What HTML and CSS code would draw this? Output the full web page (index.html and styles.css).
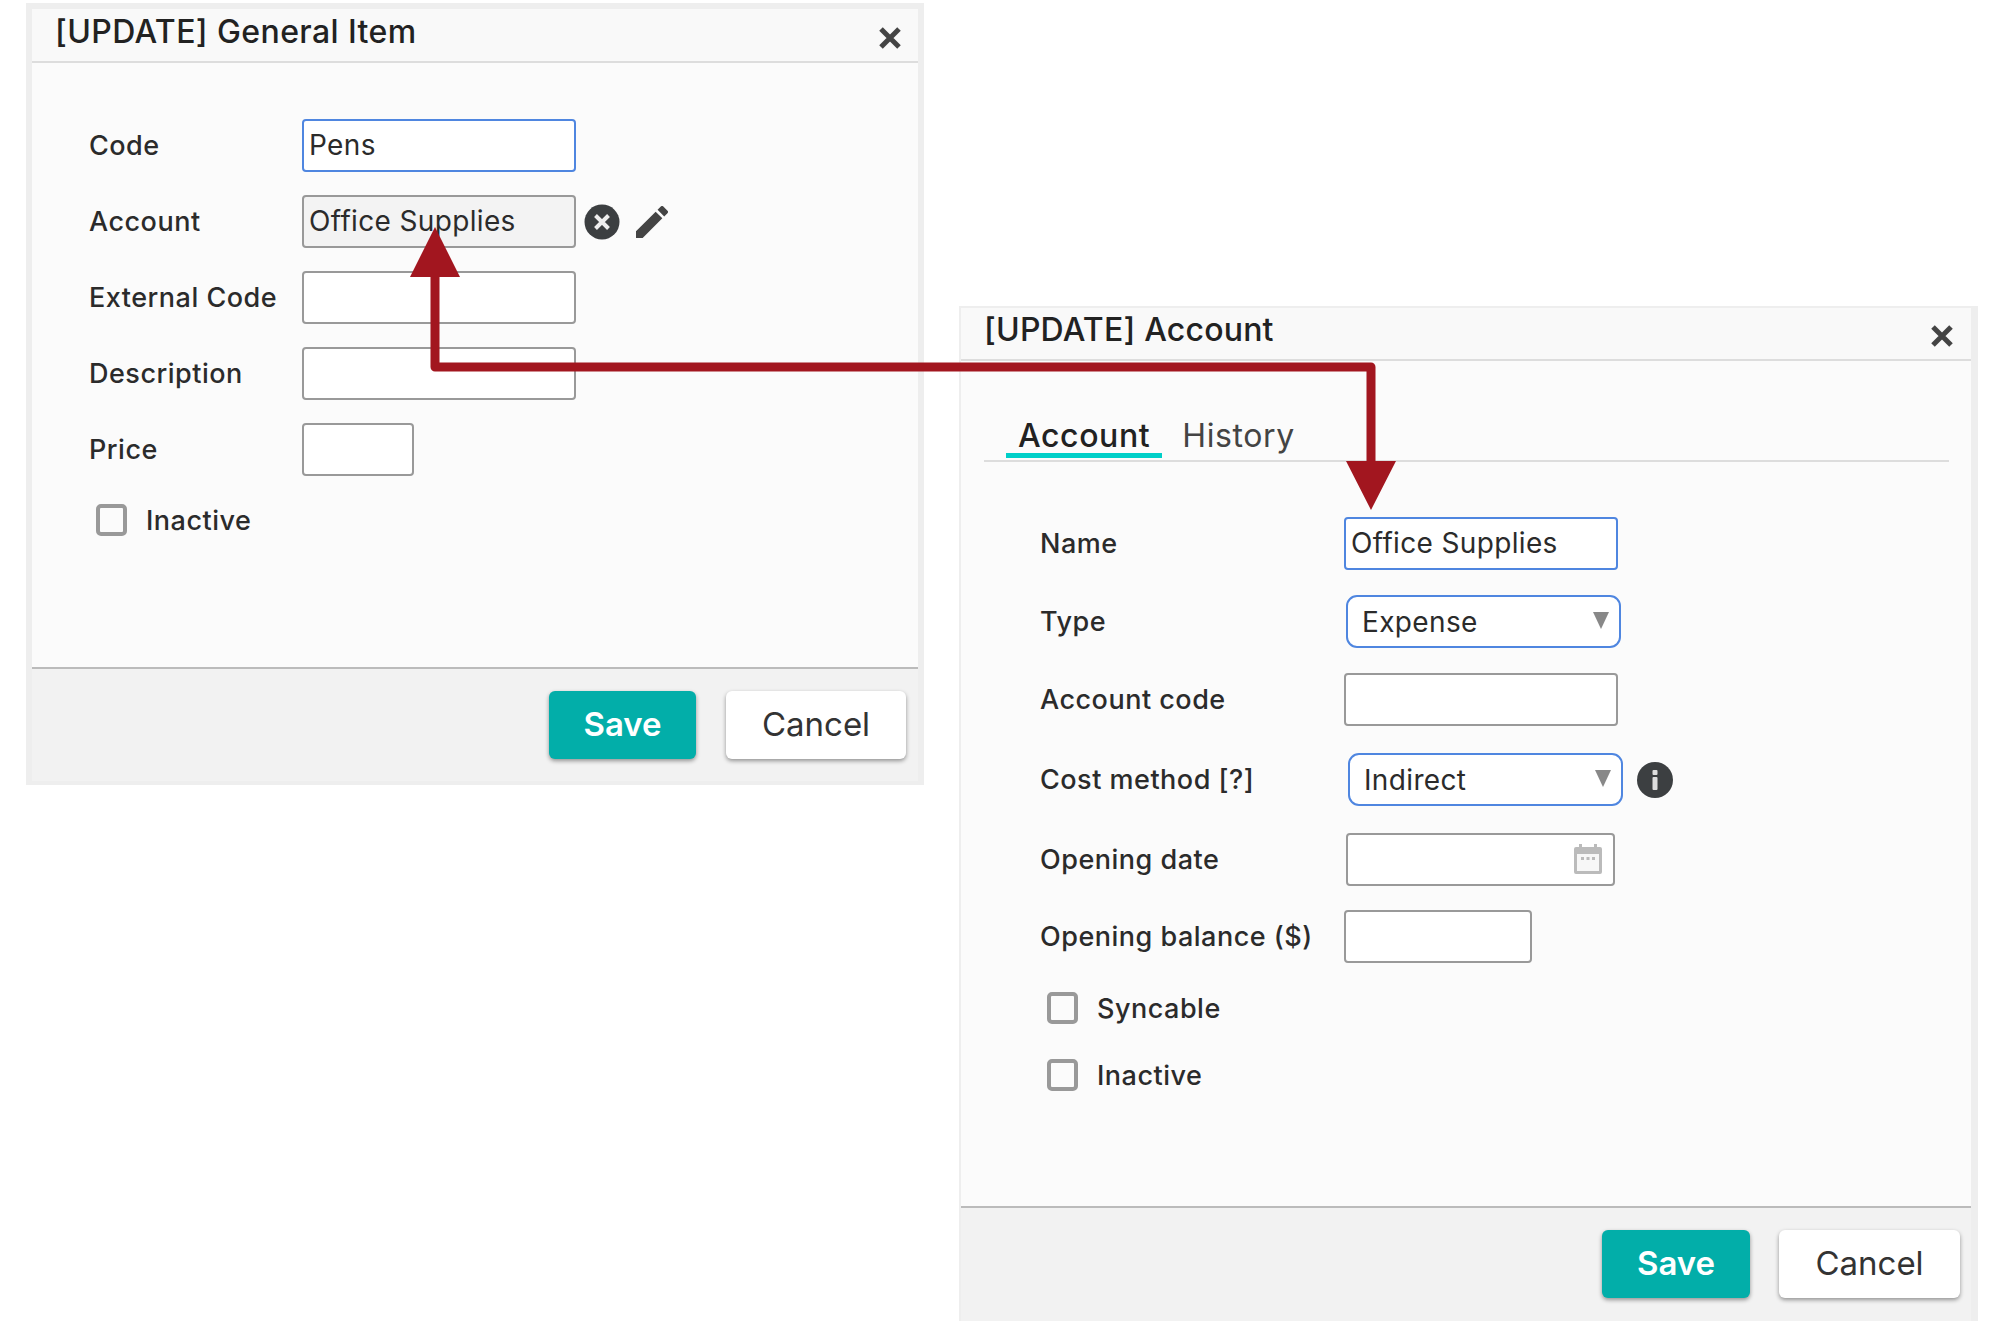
FILE: index.html
```html
<!DOCTYPE html>
<html lang="en">
<head>
<meta charset="utf-8">
<title>Update dialogs</title>
<link rel="stylesheet" href="styles.css">
</head>
<body>
<main class="canvas">
  <section class="dialog dialog-item">
    <header class="dialog-head">
      <h2 class="dialog-title">[UPDATE] General Item</h2>
      <svg class="close" viewBox="0 0 22 22"><path d="M2 2 20 20M20 2 2 20"/></svg>
    </header>
    <div class="dialog-body form-item">
      <div class="row"><span class="label">Code</span><div class="field field-wide focus">Pens</div></div>
      <div class="row"><span class="label">Account</span><div class="field field-wide readonly">Office Supplies</div>
        <svg class="icon-clear" viewBox="0 0 36 36"><circle cx="18" cy="18" r="17.5"/><path d="M11.500 11.500 24.500 24.500M24.500 11.500 11.500 24.500"/></svg>
        <svg class="icon-pencil" viewBox="3 3 18 18"><path d="M3 17.25V21h3.75L17.81 9.94l-3.75-3.75L3 17.25zM20.71 7.04a1 1 0 0 0 0-1.41l-2.34-2.34a1 1 0 0 0-1.41 0l-1.83 1.83 3.75 3.75 1.83-1.83z"/></svg>
      </div>
      <div class="row"><span class="label">External Code</span><div class="field field-wide"></div></div>
      <div class="row"><span class="label">Description</span><div class="field field-wide"></div></div>
      <div class="row"><span class="label">Price</span><div class="field field-price"></div></div>
      <div class="check check-first"><span class="box"></span><span class="label">Inactive</span></div>
    </div>
    <footer class="dialog-foot">
      <button class="btn btn-save">Save</button>
      <button class="btn btn-cancel">Cancel</button>
    </footer>
  </section>

  <section class="dialog dialog-account">
    <header class="dialog-head">
      <h2 class="dialog-title">[UPDATE] Account</h2>
      <svg class="close" viewBox="0 0 22 22"><path d="M2 2 20 20M20 2 2 20"/></svg>
    </header>
    <div class="dialog-body">
      <nav class="tabs">
        <span class="tab tab-active">Account</span>
        <span class="tab">History</span>
      </nav>
      <div class="form-account">
        <div class="row"><span class="label">Name</span><div class="field field-wide focus">Office Supplies</div></div>
        <div class="row"><span class="label">Type</span><div class="select select-type">Expense<span class="caret"></span></div></div>
        <div class="row"><span class="label">Account code</span><div class="field field-wide"></div></div>
        <div class="row row-cost"><span class="label">Cost method [?]</span><div class="select select-cost">Indirect<span class="caret"></span></div>
          <svg class="icon-info" viewBox="0 0 36 36"><circle cx="18" cy="18" r="18"/><rect x="15.5" y="8" width="5" height="5" rx="1"/><rect x="15.5" y="15" width="5" height="13" rx="1"/></svg>
        </div>
        <div class="row row-date"><span class="label">Opening date</span><div class="field field-date">
          <svg class="icon-cal" viewBox="0 0 28 30"><path d="M5 0h3v3h12V0h3v3h3a2 2 0 0 1 2 2v23a2 2 0 0 1-2 2H2a2 2 0 0 1-2-2V5a2 2 0 0 1 2-2h3z"/><rect class="cal-page" x="3" y="10" width="22" height="17"/><rect x="7" y="13" width="3" height="3"/><rect x="12.500" y="13" width="3" height="3"/><rect x="18" y="13" width="3" height="3"/></svg>
        </div></div>
        <div class="row row-balance"><span class="label">Opening balance ($)</span><div class="field field-balance"></div></div>
        <div class="check check-sync"><span class="box"></span><span class="label">Syncable</span></div>
        <div class="check check-next"><span class="box"></span><span class="label">Inactive</span></div>
      </div>
    </div>
    <footer class="dialog-foot">
      <button class="btn btn-save">Save</button>
      <button class="btn btn-cancel">Cancel</button>
    </footer>
  </section>

  <svg class="arrow" viewBox="0 0 2001 1338">
    <path class="arrow-line" d="M435 270V367H1371V470"/>
    <path class="arrow-head" d="M435 227 460 277H410ZM1346 461H1396L1371 510Z"/>
  </svg>
</main>
</body>
</html>
```
FILE: styles.css
```css
* { box-sizing: border-box; }
html, body { margin: 0; background: #fff; }
body { font-family: Inter, "Open Sans", "Liberation Sans", sans-serif; color: #2b2b2b; }
.canvas { position: relative; width: 2001px; height: 1338px; overflow: hidden; }

.dialog { position: absolute; display: flex; flex-direction: column; background: #fafafa; border-style: solid; border-color: #eee; }
.dialog-item { left: 26px; top: 3px; width: 898px; height: 782px; border-width: 6px 6px 4px 6px; }
.dialog-account { left: 959px; top: 306px; width: 1019px; height: 1015px; border-width: 2px 7px 0 2px; }

.dialog-head { display: flex; justify-content: space-between; flex: none; padding-left: 23px; border-bottom: 2px solid #ddd; background: #f9f9f9; }
.dialog-item .dialog-head { height: 54px; padding-right: 17px; }
.dialog-account .dialog-head { height: 53px; padding-right: 18px; }
.dialog-title { margin: 0; font-size: 32px; font-weight: 500; line-height: 46px; letter-spacing: 0.4px; color: #222; }
.dialog-account .dialog-title { line-height: 44px; letter-spacing: 0.2px; }
.close { width: 22px; height: 22px; margin-top: 18px; fill: none; stroke: #444; stroke-width: 5; }
.dialog-account .close { margin-top: 17px; }

.dialog-body { flex: 1; background: #fbfbfb; }
.form-item { display: flex; flex-direction: column; gap: 23px; padding: 56px 0 0 57px; }
.form-item .label { width: 213px; }
.form-account { display: flex; flex-direction: column; gap: 25px; padding: 55px 0 0 79px; }
.form-account .label { width: 304px; }

.row { display: flex; align-items: center; height: 53px; }
.label { flex: none; font-size: 27px; font-weight: 500; letter-spacing: 0.5px; color: #2b2b2b; }

.field { flex: none; height: 53px; padding-left: 5px; border: 2px solid #999; border-radius: 4px; background: #fff; font-size: 28px; line-height: 49px; letter-spacing: 0.35px; }
.field-wide { width: 274px; }
.field-price { width: 112px; }
.focus { border-color: #4f86e0; }
.readonly { background: #f3f3f3; }
.field-date { position: relative; width: 269px; margin-left: 2px; }
.field-balance { width: 188px; }

.select { display: flex; align-items: center; justify-content: space-between; flex: none; width: 275px; height: 53px; padding: 0 10px 0 14px; border: 2px solid #4f86e0; border-radius: 11px; background: #fff; font-size: 28px; letter-spacing: 0.35px; }
.select-type { margin-left: 2px; }
.select-cost { margin-left: 4px; }
.caret { width: 0; height: 0; margin-top: -3px; border-style: solid; border-width: 17px 8px 0 8px; border-color: #888 transparent transparent; }

.row-cost { margin-top: 2px; }
.row-date { margin-top: 2px; }
.row-balance { margin-top: -1px; }

.icon-clear { width: 36px; height: 36px; margin-left: 8px; fill: #3c3f41; stroke: none; }
.icon-clear path { fill: none; stroke: #eee; stroke-width: 4; }
.icon-pencil { width: 32px; height: 32px; margin-left: 16px; fill: #444; }
.icon-info { width: 36px; height: 36px; margin-left: 14px; fill: #3c3f41; }
.icon-info rect { fill: #ddd; }
.icon-cal { position: absolute; right: 11px; top: 9px; width: 28px; height: 30px; fill: #bbb; }
.icon-cal .cal-page { fill: #f7f7f7; }

.check { display: flex; align-items: center; height: 32px; padding-left: 7px; }
.check .label { width: auto; }
.box { flex: none; width: 31px; height: 32px; margin-right: 19px; border: 4px solid #999; border-radius: 5px; background: #fbfbfb; }
.check-first { margin-top: 5px; }
.check-sync { margin-top: 4px; }
.check-next { margin-top: 10px; }

.tabs { display: flex; margin: 0 22px 0 23px; padding: 53px 0 2px 22px; border-bottom: 2px solid #ddd; }
.tab { height: 44px; padding: 0 12px; font-size: 32px; line-height: 43px; letter-spacing: 0.6px; color: #444; }
.tab + .tab { margin-left: 8px; }
.tab-active { border-bottom: 5px solid #00cfc8; color: #222; font-weight: 500; }

.dialog-foot { display: flex; justify-content: flex-end; flex: none; border-top: 2px solid #bbb; background: #f2f2f2; padding-top: 22px; }
.dialog-item .dialog-foot { height: 114px; gap: 30px; padding-right: 12px; }
.dialog-account .dialog-foot { height: 115px; gap: 29px; padding-right: 11px; }
.btn { height: 68px; padding: 0 0 2px; border: 0; border-radius: 6px; font-family: inherit; font-size: 33px; box-shadow: 0 2px 4px rgba(0, 0, 0, 0.4); }
.btn-save { width: 147px; background: #02aea9; color: #fff; font-weight: 600; }
.btn-cancel { width: 180px; background: #fff; color: #333; font-weight: 400; }
.dialog-account .btn-save { width: 148px; }
.dialog-account .btn-cancel { width: 181px; }

.arrow { position: absolute; left: 0; top: 0; width: 2001px; height: 1338px; pointer-events: none; }
.arrow-line { fill: none; stroke: #a2161f; stroke-width: 9; stroke-linejoin: round; }
.arrow-head { fill: #a2161f; }
```
